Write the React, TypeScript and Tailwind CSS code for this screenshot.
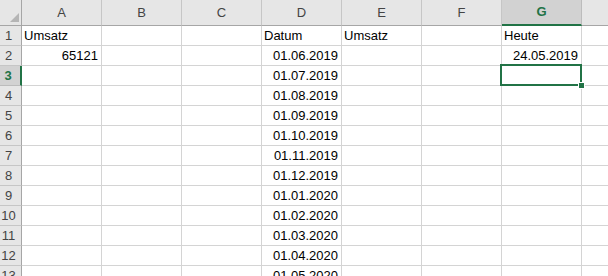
import React from "react";

const COLS = ["A", "B", "C", "D", "E", "F", "G", "H"];

// row -> column -> [text, align]
const DATA: Record<number, Record<string, [string, "l" | "r"]>> = {
  1: { A: ["Umsatz", "l"], D: ["Datum", "l"], E: ["Umsatz", "l"], G: ["Heute", "l"] },
  2: { A: ["65121", "r"], D: ["01.06.2019", "r"], G: ["24.05.2019", "r"] },
  3: { D: ["01.07.2019", "r"] },
  4: { D: ["01.08.2019", "r"] },
  5: { D: ["01.09.2019", "r"] },
  6: { D: ["01.10.2019", "r"] },
  7: { D: ["01.11.2019", "r"] },
  8: { D: ["01.12.2019", "r"] },
  9: { D: ["01.01.2020", "r"] },
  10: { D: ["01.02.2020", "r"] },
  11: { D: ["01.03.2020", "r"] },
  12: { D: ["01.04.2020", "r"] },
  13: { D: ["01.05.2020", "r"] },
};

const ROWS = Array.from({ length: 13 }, (_, i) => i + 1);

export default function App() {
  return (
    <div className="relative w-[608px] h-[276px] overflow-hidden bg-white font-['Liberation_Sans',Arial,sans-serif] text-[13px] text-black">
      <div className="grid grid-cols-[22px_repeat(7,80px)_80px]">
        {/* Corner */}
        <div className="relative h-[26px] bg-[#e6e6e6] border-r border-b border-[#a6a6a6]">
          <div className="absolute right-[2px] bottom-[3px] w-0 h-0 border-l-[9px] border-l-transparent border-b-[9px] border-b-[#b5b5b5]" />
        </div>
        {/* Column headers */}
        {COLS.map((c) =>
          c === "G" ? (
            <div
              key={c}
              className="h-[26px] flex items-center justify-center bg-[#d2d2d2] text-[#217346] font-bold border-r border-[#bcbcbc] border-b-2 border-b-[#217346]"
            >
              {c}
            </div>
          ) : (
            <div
              key={c}
              className="h-[26px] flex items-center justify-center bg-[#e6e6e6] text-[#444] border-r border-[#c6c6c6] border-b border-b-[#a6a6a6]"
            >
              {c === "H" ? "" : c}
            </div>
          )
        )}

        {/* Body rows */}
        {ROWS.map((r) => (
          <React.Fragment key={r}>
            {r === 3 ? (
              <div className="h-[20px] leading-[20px] pr-[4px] text-center bg-[#d2d2d2] text-[#217346] font-bold border-b border-[#bcbcbc] border-r-2 border-r-[#217346]">
                {r}
              </div>
            ) : (
              <div className="h-[20px] leading-[20px] pr-[4px] text-center bg-[#e6e6e6] text-[#444] border-b border-[#c6c6c6] border-r border-r-[#a6a6a6]">
                {r}
              </div>
            )}
            {COLS.map((c) => {
              const cell = DATA[r]?.[c];
              return (
                <div
                  key={c}
                  className={`h-[20px] leading-[20px] pl-[2px] pr-[3px] whitespace-nowrap border-r border-b border-[#d4d4d4] ${
                    cell && cell[1] === "r" ? "text-right" : "text-left"
                  }`}
                >
                  {cell ? cell[0] : ""}
                </div>
              );
            })}
          </React.Fragment>
        ))}
      </div>

      {/* Active cell G3 */}
      <div className="absolute left-[500px] top-[64px] w-[82px] h-[22px] border-2 border-[#217346]" />
      <div className="absolute left-[578px] top-[82px] w-[7px] h-[7px] bg-[#217346] border border-white" />
    </div>
  );
}
